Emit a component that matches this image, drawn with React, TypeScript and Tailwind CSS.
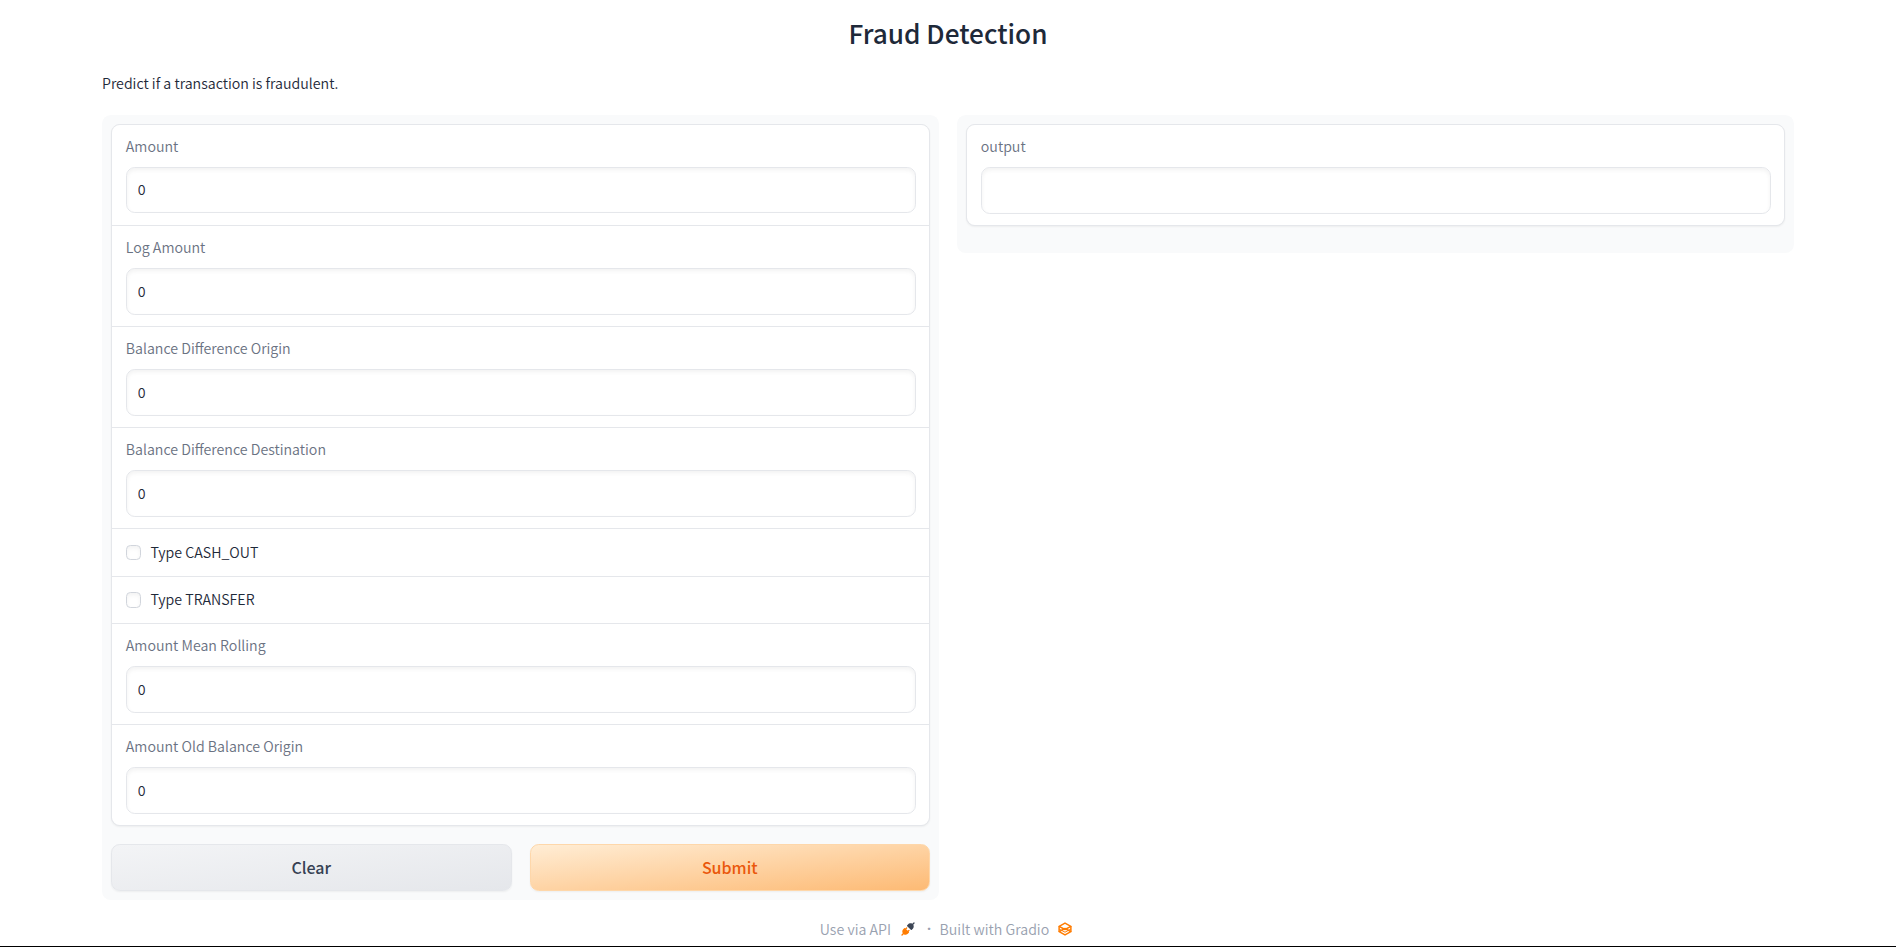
import { useState } from "react";

function TextField({ label, initial = "0", tall = false }: { label: string; initial?: string; tall?: boolean }) {
  const [value, setValue] = useState(initial);
  return (
    <label className="block h-[100.1px] bg-white pt-[10px] pr-[13.2px] pl-[13.8px]">
      <span className="block h-[22px] text-[14.2px] leading-[22px] text-gray-500">{label}</span>
      <input
        className={`mt-[10.1px] block w-full rounded-[8.8px] border border-gray-200 bg-white px-[11px] pb-[1.6px] text-[14.2px] text-gray-800 shadow-[inset_0_2.2px_4.4px_0_rgba(0,0,0,0.05)] outline-none ${tall ? "h-[47px]" : "h-[46.4px]"}`}
        value={value}
        onChange={(e) => setValue(e.target.value)}
      />
    </label>
  );
}

function CheckField({ label }: { label: string }) {
  return (
    <label className="flex h-[46.4px] items-center gap-[9px] bg-white px-[14px]">
      <input
        type="checkbox"
        className="size-[15.4px] appearance-none rounded-[4.4px] border border-gray-300 bg-white shadow-[inset_0_2.2px_4.4px_0_rgba(0,0,0,0.05)]"
      />
      <span className="pb-[1.2px] text-[14.2px] leading-[22px] text-gray-800">{label}</span>
    </label>
  );
}

function PlugIcon() {
  return (
    <svg viewBox="0 0 28 28" className="ml-[9.5px] size-[14px]" fill="none">
      <path
        d="M26.94 2.94a1.33 1.33 0 0 0-1.88-1.88l-2.49 2.48c-1.45-.95-3.03-1.1-4.4-.9-1.62.25-3.06 1.03-3.78 1.75l-2 2a1.33 1.33 0 0 0 0 1.89l7.33 7.33c.52.52 1.37.52 1.89 0l2-2c.72-.72 1.5-2.16 1.75-3.79.2-1.36.05-2.94-.9-4.39z"
        fill="#3c4555"
      />
      <path
        d="M1.06 25.06a1.33 1.33 0 0 0 1.88 1.88l2.49-2.48c1.45.95 3.03 1.1 4.4.9 1.62-.25 3.06-1.03 3.78-1.75l2-2a1.33 1.33 0 0 0 0-1.89l-7.33-7.33a1.33 1.33 0 0 0-1.89 0l-2 2c-.72.72-1.5 2.16-1.75 3.79-.2 1.36-.05 2.94.9 4.39z"
        fill="#ff7c00"
      />
      <path d="M11.3 12 8.6 14.7M16 16.7l-2.7 2.7" stroke="#ff7c00" strokeWidth="2.67" strokeLinecap="round" />
    </svg>
  );
}

function GradioIcon() {
  return (
    <svg viewBox="0 0 28 28" className="ml-[9px] size-[14px]" fill="none" stroke="#ff7c00" strokeWidth="2.9" strokeLinejoin="round">
      <path d="M14 2.2 25.8 8.6 14 15 2.2 8.6z" />
      <path d="M14 13 25.8 19.4 14 25.8 2.2 19.4z" />
      <path d="M2.2 8.6v10.8M25.8 8.6v10.8" />
      <path d="M2.2 14 14 20.4l11.8-6.4" strokeWidth="2" />
    </svg>
  );
}

const card =
  "flex flex-col gap-px overflow-hidden rounded-[8.8px] border border-gray-200 bg-gray-200 shadow-[0_1px_2px_0_rgba(0,0,0,0.05)]";

export default function App() {
  return (
    <div className="flex h-[947px] flex-col overflow-hidden border-b border-black bg-white px-[102px] font-['Noto_Sans_CJK_SC',sans-serif] font-[350] text-gray-800">
      <h1 className="mt-[14px] h-[38px] text-center text-[26.2px] leading-[38px] font-medium">Fraud Detection</h1>
      <p className="mt-[20px] h-[22px] text-[14.2px] leading-[22px]">Predict if a transaction is fraudulent.</p>
      <main className="mt-[21px] flex items-start gap-[18px]">
        <section className="h-[785px] flex-1 rounded-[8.8px] bg-gray-50 p-[9px]">
          <div className={card}>
            <TextField label="Amount" />
            <TextField label="Log Amount" />
            <TextField label="Balance Difference Origin" />
            <TextField label="Balance Difference Destination" />
            <CheckField label="Type CASH_OUT" />
            <CheckField label="Type TRANSFER" />
            <TextField label="Amount Mean Rolling" />
            <TextField label="Amount Old Balance Origin" />
          </div>
          <div className="mt-[17.6px] flex gap-[18px]">
            <button className="h-[47px] flex-1 rounded-[8.8px] border border-gray-200 bg-[linear-gradient(to_bottom_right,#f3f4f6,#e5e7eb)] text-[16px] font-medium text-gray-700 shadow-[0_1px_2px_0_rgba(0,0,0,0.05)]">
              Clear
            </button>
            <button className="h-[47px] flex-1 rounded-[8.8px] border border-[#fed7aa] bg-[linear-gradient(to_bottom_right,#ffedd5,#fdba74)] text-[16px] font-medium text-[#ea580c] shadow-[0_1px_2px_0_rgba(0,0,0,0.05)]">
              Submit
            </button>
          </div>
        </section>
        <section className="h-[138px] flex-1 rounded-[8.8px] bg-gray-50 p-[9px]">
          <div className={card}>
            <TextField label="output" initial="" tall />
          </div>
        </section>
      </main>
      <footer className="mt-[18px] flex h-[22px] items-center justify-center pr-[4px] text-[14.2px] leading-[22px] text-gray-400">
        <span>Use via API</span>
        <PlugIcon />
        <span className="mr-[8.5px] ml-[12.5px] w-[4px] text-center font-['Open_Sans',sans-serif] font-bold">·</span>
        <span>Built with Gradio</span>
        <GradioIcon />
      </footer>
    </div>
  );
}
